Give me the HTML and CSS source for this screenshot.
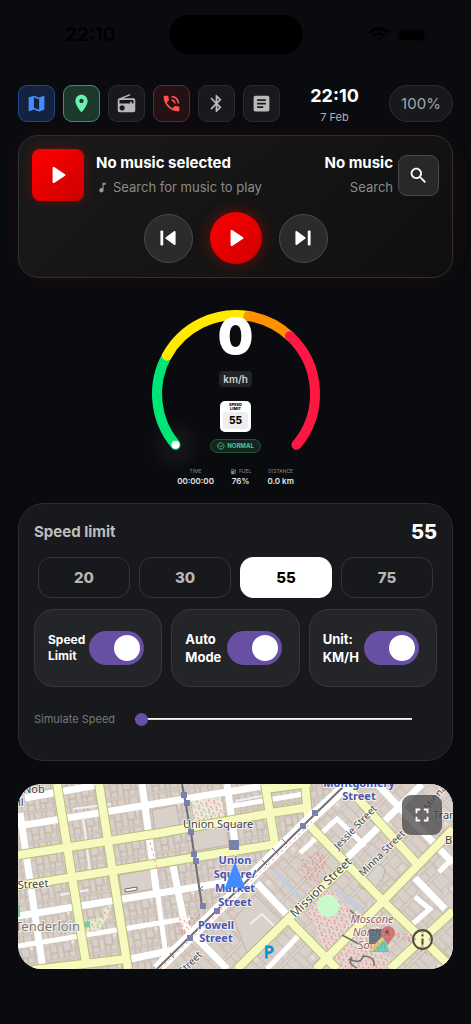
FILE: index.html
```html
<!DOCTYPE html>
<html lang="en">

<head>
  <meta charset="UTF-8">
  <title>Drive Dashboard</title>
  <meta name="viewport" content="width=device-width, initial-scale=1.0">
  <link rel="stylesheet" href="styles.css">
</head>

<body>

  <!-- Status bar -->
  <div class="status-bar">
    <div class="status-time">22:10</div>
    <div class="island"></div>
    <div class="status-icons">
      <svg width="24" height="6" viewBox="0 0 24 6" fill="#07080b">
        <circle cx="3" cy="5" r="1" /><circle cx="9" cy="5" r="1" /><circle cx="15" cy="5" r="1" /><circle cx="21" cy="5" r="1" />
      </svg>
      <svg width="20" height="15" viewBox="0 0 20 15" fill="none" stroke="#000" stroke-width="3">
        <path d="M1 5.5C6 .5 14 .5 19 5.5" />
        <path d="M4.5 9C7.5 6 12.5 6 15.5 9" />
        <path d="M7.5 11.5Q10 9.5 12.5 11.5L10 14z" fill="#000" stroke="none" />
      </svg>
      <svg width="32" height="14" viewBox="0 0 32 14">
        <rect x=".5" y=".5" width="28" height="13" rx="4" fill="none" stroke="#050608" />
        <rect x="2" y="2" width="25" height="10" rx="3" />
        <path d="M30 5v4q2-2 0-4" fill="#050608" />
      </svg>
    </div>
  </div>

  <main>
    <!-- Shortcuts and clock -->
    <header class="top-bar">
      <nav class="shortcuts">
        <button type="button" class="shortcut blue" aria-label="Map">
          <svg viewBox="0 0 24 24"><path d="M20.5 3l-.16.03L15 5.1 9 3 3.36 4.9c-.21.07-.36.25-.36.48V20.5c0 .28.22.5.5.5l.16-.03L9 18.9l6 2.1 5.64-1.9c.21-.07.36-.25.36-.48V3.5c0-.28-.22-.5-.5-.5zM15 19l-6-2.11V5l6 2.11V19z" /></svg>
        </button>
        <button type="button" class="shortcut green" aria-label="Location">
          <svg viewBox="0 0 24 24"><path d="M12 2C8.13 2 5 5.13 5 9c0 5.25 7 13 7 13s7-7.75 7-13c0-3.87-3.13-7-7-7zm0 9.5c-1.38 0-2.5-1.12-2.5-2.5s1.12-2.5 2.5-2.5 2.5 1.12 2.5 2.5-1.12 2.5-2.5 2.5z" /></svg>
        </button>
        <button type="button" class="shortcut" aria-label="Radio">
          <svg viewBox="0 0 24 24"><path d="M3.24 6.15C2.51 6.43 2 7.17 2 8v12c0 1.1.89 2 2 2h16c1.11 0 2-.9 2-2V8c0-1.11-.89-2-2-2H8.3l8.26-3.34L15.88 1 3.24 6.15zM7 20c-1.66 0-3-1.34-3-3s1.34-3 3-3 3 1.34 3 3-1.34 3-3 3zm13-8h-2v-2h-2v2H4V8h16v4z" /></svg>
        </button>
        <button type="button" class="shortcut red" aria-label="Phone">
          <svg viewBox="0 0 24 24"><path d="M20 15.5c-1.25 0-2.45-.2-3.57-.57-.35-.11-.74-.03-1.02.24l-2.2 2.2c-2.83-1.44-5.15-3.75-6.59-6.59l2.2-2.21c.28-.26.36-.65.25-1C8.7 6.45 8.5 5.25 8.5 4c0-.55-.45-1-1-1H4c-.55 0-1 .45-1 1 0 9.39 7.61 17 17 17 .55 0 1-.45 1-1v-3.5c0-.55-.45-1-1-1zM19 12h2c0-4.97-4.03-9-9-9v2c3.87 0 7 3.13 7 7zm-4 0h2c0-2.76-2.24-5-5-5v2c1.66 0 3 1.34 3 3z" /></svg>
        </button>
        <button type="button" class="shortcut" aria-label="Bluetooth">
          <svg viewBox="0 0 24 24"><path d="M17.71 7.71L12 2h-1v7.59L6.41 5 5 6.41 10.59 12 5 17.59 6.41 19 11 14.41V22h1l5.71-5.71-4.3-4.29 4.3-4.29zM13 5.83l1.88 1.88L13 9.59V5.83zm1.88 10.46L13 18.17v-3.76l1.88 1.88z" /></svg>
        </button>
        <button type="button" class="shortcut" aria-label="Notes">
          <svg viewBox="0 0 24 24"><path d="M19 3H5c-1.1 0-2 .9-2 2v14c0 1.1.9 2 2 2h14c1.1 0 2-.9 2-2V5c0-1.1-.9-2-2-2zm-5 14H7v-2h7v2zm3-4H7v-2h10v2zm0-4H7V7h10v2z" /></svg>
        </button>
      </nav>
      <div class="clock">
        <div class="clock-time">22:10</div>
        <div class="clock-date">7 Feb</div>
      </div>
      <div class="battery">100%</div>
    </header>

    <!-- Music player -->
    <section class="music">
      <div class="music-info">
        <div class="cover">
          <svg viewBox="0 0 24 24" width="26" height="26"><path d="M7 5.500v13c0 .8.900 1.200 1.500.8l10-6.500c.6-.4.6-1.200 0-1.600l-10-6.500C7.900 4.300 7 4.700 7 5.500z" /></svg>
        </div>
        <div class="track">
          <div class="track-title">No music selected</div>
          <div class="track-sub">
            <svg viewBox="0 0 24 24" width="13" height="13"><path d="M12 3v10.55c-.59-.34-1.27-.55-2-.55-2.21 0-4 1.79-4 4s1.79 4 4 4 4-1.79 4-4V7h4V3h-6z" /></svg>
            Search for music to play
          </div>
        </div>
        <div class="track track-right">
          <div class="track-title">No music</div>
          <div class="track-sub">Search</div>
        </div>
        <button type="button" class="search" aria-label="Search">
          <svg viewBox="0 0 24 24" width="21" height="21"><path d="M15.5 14h-.79l-.28-.27C15.41 12.59 16 11.11 16 9.5 16 5.91 13.09 3 9.5 3S3 5.91 3 9.5 5.91 16 9.5 16c1.61 0 3.09-.59 4.23-1.57l.27.28v.79l5 4.99L20.49 19l-4.99-5zm-6 0C7.01 14 5 11.99 5 9.5S7.01 5 9.5 5 14 7.01 14 9.5 11.99 14 9.5 14z" /></svg>
        </button>
      </div>
      <div class="controls">
        <button type="button" class="control" aria-label="Previous">
          <svg viewBox="0 0 24 24" width="26" height="26"><rect x="5" y="5" width="2.6" height="14" rx="1" /><path d="M19 6.500v11c0 .8-.8 1.200-1.500.8l-7.500-5.500c-.6-.4-.6-1.200 0-1.600l7.500-5.500c.7-.4 1.500 0 1.500.8z" /></svg>
        </button>
        <button type="button" class="control play" aria-label="Play">
          <svg viewBox="0 0 24 24" width="26" height="26"><path d="M7 5.500v13c0 .8.900 1.200 1.500.8l10-6.500c.6-.4.6-1.200 0-1.600l-10-6.500C7.900 4.300 7 4.700 7 5.500z" /></svg>
        </button>
        <button type="button" class="control" aria-label="Next">
          <svg viewBox="0 0 24 24" width="26" height="26"><rect x="16.4" y="5" width="2.6" height="14" rx="1" /><path d="M5 6.500v11c0 .8.800 1.200 1.500.8l7.500-5.500c.6-.4.6-1.200 0-1.600L6.500 5.700C5.800 5.300 5 5.700 5 6.500z" /></svg>
        </button>
      </div>
    </section>

    <!-- Speedometer -->
    <section class="gauge">
      <svg class="dial" width="170" height="170" viewBox="0 0 170 170" fill="none" stroke-width="10" stroke-linecap="round">
        <defs>
          <radialGradient id="glow">
            <stop offset="0" stop-color="#fff" stop-opacity=".06" />
            <stop offset="1" stop-color="#fff" stop-opacity="0" />
          </radialGradient>
        </defs>
        <circle cx="24.5" cy="135.8" r="28" fill="url(#glow)" />
        <path d="M24.5 135.8A79 79 0 0 1 15.9 46.7" stroke="#00e676" />
        <path d="M15.9 46.7A79 79 0 0 1 97.4 7" stroke="#ffea00" />
        <path d="M97.4 7A79 79 0 0 1 138.9 27.2" stroke="#ff9100" />
        <path d="M138.9 27.2A79 79 0 0 1 145.5 135.8" stroke="#ff1744" />
        <circle cx="24.5" cy="135.8" r="4" fill="#fff" />
      </svg>
      <div class="readout">
        <div class="speed">0</div>
        <div class="unit">km/h</div>
        <div class="sign">
          <div class="sign-label">SPEED<br>LIMIT</div>
          <div class="sign-value">55</div>
        </div>
        <div class="state">
          <svg viewBox="0 0 24 24" width="8" height="8" fill="none" stroke="currentColor" stroke-width="2.5"><path d="M21 9.500A9.500 9.500 0 1 1 17 4M7 11l4 4L21 5" /></svg>
          NORMAL
        </div>
        <div class="stats">
          <div class="stat">
            <div class="stat-label">TIME</div>
            <div class="stat-value">00:00:00</div>
          </div>
          <div class="stat">
            <div class="stat-label">
              <svg viewBox="0 0 24 24" width="7" height="7" fill="currentColor"><path d="M19.77 7.23l.01-.01-3.72-3.72L15 4.56l2.11 2.11c-.94.36-1.61 1.26-1.61 2.33 0 1.38 1.12 2.5 2.5 2.5.36 0 .69-.08 1-.21v7.21c0 .55-.45 1-1 1s-1-.45-1-1V14c0-1.1-.9-2-2-2h-1V5c0-1.1-.9-2-2-2H6c-1.1 0-2 .9-2 2v16h10v-7.5h1.5v5c0 1.38 1.12 2.5 2.5 2.5s2.5-1.12 2.5-2.5V9c0-.69-.28-1.32-.73-1.77zM12 10H6V5h6v5z" /></svg>
              FUEL
            </div>
            <div class="stat-value">76%</div>
          </div>
          <div class="stat">
            <div class="stat-label">DISTANCE</div>
            <div class="stat-value">0.0 km</div>
          </div>
        </div>
      </div>
    </section>

    <!-- Speed limit settings -->
    <section class="settings">
      <div class="settings-head">
        <h2>Speed limit</h2>
        <span class="limit">55</span>
      </div>
      <div class="presets">
        <button type="button">20</button>
        <button type="button">30</button>
        <button type="button" class="active">55</button>
        <button type="button">75</button>
      </div>
      <div class="toggles">
        <div class="toggle">
          <label class="small" for="speed-limit">Speed<br>Limit</label>
          <input type="checkbox" role="switch" id="speed-limit" checked>
        </div>
        <div class="toggle">
          <label for="auto-mode">Auto<br>Mode</label>
          <input type="checkbox" role="switch" id="auto-mode" checked>
        </div>
        <div class="toggle">
          <label for="unit">Unit:<br>KM/H</label>
          <input type="checkbox" role="switch" id="unit" checked>
        </div>
      </div>
      <div class="simulate">
        <label for="simulate">Simulate Speed</label>
        <input type="range" id="simulate" min="0" max="200" value="0">
      </div>
    </section>

    <!-- Map -->
    <section class="map">
      <svg class="map-canvas" viewBox="0 0 435 185" preserveAspectRatio="xMidYMid slice">
        <defs>
          <g id="lots" fill="#d9d0c9" stroke="#c2b2a7" stroke-width=".8">
            <rect width="42" height="30" fill="#ded8d2" stroke="none" />
            <path d="M0 1h6v9H0zM6 1h5v12H6zM11 1h8v7h-8zM19 1h4v11h-4zM23 1h9v9h-9zM32 1h6v13h-6zM38 1h4v8h-4z" />
            <path d="M11 8h8v6h-8zM0 10h6v6H0zM6 15h7v8H6zM0 18h6v11H0zM13 16h6v13h-6zM6 23h7v6H6zM19 14h8v9h-8zM19 23h5v6h-5zM24 23h7v6h-7zM27 12h5v9h-5zM32 16h6v7h-6zM32 23h10v6H32zM38 10h4v11h-4z" />
            <path d="M14 9h2v3h-2zM28 13h3v3h-3z" fill="#eee7dc" stroke="none" />
          </g>
          <pattern id="blocks" width="42" height="30" patternUnits="userSpaceOnUse" patternTransform="rotate(-9)"><use href="#lots" /></pattern>
          <pattern id="blocks-south" width="42" height="30" patternUnits="userSpaceOnUse" patternTransform="rotate(-45) scale(1.5)"><use href="#lots" /></pattern>
          <pattern id="dots" width="8" height="7" patternUnits="userSpaceOnUse" patternTransform="rotate(-20)">
            <path d="M1 1h2M5 3l1 1M2 5l1 1M6 6h1" stroke="#f56f6f" stroke-width="1.2" />
          </pattern>
        </defs>

        <!-- City blocks -->
        <rect width="435" height="185" fill="url(#blocks)" />
        <path d="M139 185L330 0h105v185z" fill="#d9d0c9" />
        <path d="M139 185L330 0h105v185z" fill="url(#blocks-south)" opacity=".65" />
        <path d="M101 91l34-6 3 19-34 7zM174 48l34-7 3 20-35 6zM134 26l24-5 4 20-25 6z" fill="#d9d0c9" stroke="#c2b2a7" />
        <path d="M216 135l21-24 28 27-35 34z" fill="#d9d0c9" stroke="#c2b2a7" />
        <path d="M340 102l20-22q10 2 5 14l-12 15z" fill="#d8d3ce" stroke="#bcaea3" />

        <!-- Minor streets -->
        <g fill="none">
          <path d="M0 42L142 19 245 2M7 14L85 0M2 29L25 185M0 132L142 109 215 97M112 175L165 164M124 0L139 112M155 82L167 142 209 185M209 0L217 59M239 99L270 132M329 74L389 15 404 0M359 0L435 79M397 94L427 125" stroke="#ccc5bf" stroke-width="8" />
          <path d="M0 42L142 19 245 2M7 14L85 0M2 29L25 185M0 132L142 109 215 97M112 175L165 164M124 0L139 112M155 82L167 142 209 185M209 0L217 59M239 99L270 132M329 74L389 15 404 0M359 0L435 79M397 94L427 125" stroke="#fff" stroke-width="7" />
          <path d="M0 162L172 134M139 105L149 179M214 22L292 9M249 185L282 150M282 69L319 35 347 62M392 142L412 125 397 113M421 88L435 74" stroke="#fff" stroke-width="5" />
          <path d="M65 34l4 26M69 65l3 23M42 111l28-5M55 25l38-5M218 17l30-6M232 140l12-10 15 15" stroke="#eef0f4" stroke-width="2" />
          <path d="M255 85l38 40M318 105l26 21" stroke="#c8ccd9" stroke-width="5" />
        </g>

        <!-- Parks and plazas -->
        <path d="M174 17l30-4 2 21-30 5z" fill="#e6eddc" />
        <path d="M174 17l30-4 2 21-30 5z" fill="url(#dots)" />
        <path d="M67 137l18-4 1-9 6-2-2 12-10 13-12 2z" fill="#dcefcf" />
        <path d="M67 137l18-4 1-9 6-2-2 12-10 13-12 2z" fill="url(#dots)" />
        <path d="M66 138l6-1v6l-6 1z" fill="#79caa4" />
        <path d="M290 128l17-25 10 6 30 38 27 31-10 7h-45l-14-21z" fill="#e1d9d2" />
        <path d="M290 128l17-25 10 6 30 38 27 31-10 7h-45l-14-21zM160 134l24-8-4 12-12 15-11-9zM376 150l25-2 31 28-4 6-38-22z" fill="url(#dots)" />
        <path d="M282 76l20-9 8 11-8 18-16 4z" fill="url(#dots)" />
        <circle cx="310" cy="122" r="11" fill="#c8facc" />
        <path d="M0 121v12h2v-12z" fill="#79caa4" />

        <!-- Main streets -->
        <g fill="none" stroke-linejoin="round">
          <path d="M39 0L68 179M81 0L110 185M0 71L142 49 259 28 292 23M0 102L142 79 259 60M15 186L108 175M247 0L257 60M287 0L291 42M247 5L292-1M292 42L365 117 435 185M327 0L399 80M435 45L365 117 298 185M329 80L270 135 219 185M270 135L319 185M435 127L372 185" stroke="#b9bd7c" stroke-width="10" />
          <path d="M39 0L68 179M81 0L110 185M0 71L142 49 259 28 292 23M0 102L142 79 259 60M15 186L108 175M247 0L257 60M287 0L291 42M247 5L292-1M292 42L365 117 435 185M327 0L399 80M435 45L365 117 298 185M329 80L270 135 219 185M270 135L319 185M435 127L372 185" stroke="#f7fabf" stroke-width="8" />
          <path d="M139 185L292 35 330 0" stroke="#fff" stroke-width="11" />
          <path d="M132 58L141 92M142 185L294 38" stroke="#f79a9a" stroke-dasharray="3 3" />
        </g>

        <!-- Rail lines and stations -->
        <g fill="none" stroke="#707070">
          <path d="M164 0L173 49 184 122M139 185L292 35 325 3" stroke-width="2" />
          <path d="M180 102l5 5M185 102l-5 5M152 169l4 5M254 64l6 6M244 76l5 5M264 55l5 5" />
          <path d="M331 175q12 6 14-3 12 0 11 10M334 173q-5 7 5 11M332 126l8 8M324 151l19 10" stroke-width="1.5" />
        </g>
        <path d="M163 8h6v6h-6zM166 16h6v6h-6zM170 45h6v6h-6zM173 67h6v6h-6zM175 74h6v6h-6zM182 119h6v6h-6zM196 124h6v6h-6zM169 151h6v6h-6zM282 39h6v6h-6zM294 26h6v6h-6zM211 56h10v10h-10z" fill="#7981b0" />
        <path d="M107 105l12-2v3l-12 2z" fill="#fff" stroke="#776666" />

        <!-- Labels -->
        <g class="street-label">
          <text x="5" y="9">Nob</text>
          <text x="-11" y="22">Hill</text>
          <text x="0" y="105" transform="rotate(-4 0 105)">Street</text>
          <text x="165" y="44">Union Square</text>
          <text class="narrow-street" x="320" y="66" transform="rotate(-46 320 66)">Jessie Street</text>
          <text class="narrow-street" x="345" y="93" transform="rotate(-45 345 93)">Minna Street</text>
          <text class="narrow-street" x="410" y="27" transform="rotate(-50 410 27)">Minna Street</text>
          <text class="wide-street" x="277" y="134" transform="rotate(-44 277 134)">Mission Street</text>
          <text class="narrow-street" x="152" y="204" transform="rotate(-45 152 204)">4th Street</text>
          <text x="415" y="35">Transbay</text>
          <text x="427" y="60">Br</text>
        </g>
        <text class="area-label" x="-3" y="147">Tenderloin</text>
        <g class="station-label">
          <text x="217" y="80">Union</text>
          <text x="217" y="94">Square/</text>
          <text x="217" y="108">Market</text>
          <text x="217" y="122">Street</text>
          <text x="198" y="145">Powell</text>
          <text x="198" y="158">Street</text>
          <text x="341" y="3">Montgomery</text>
          <text x="341" y="16">Street</text>
        </g>
        <g class="place-label">
          <text x="354" y="139">Moscone</text>
          <text x="354" y="152">North &amp;</text>
          <text x="354" y="165">South</text>
        </g>
        <text class="parking" x="246" y="174">P</text>

        <!-- Landmark logo -->
        <g opacity=".8">
          <path d="M351 145h15v15h-15z" fill="#4e5d70" />
          <path d="M351 168l15-18 5 18z" fill="#55c7a6" />
          <path d="M351 166l15-15 2 3-14 14z" fill="#efc35b" />
          <path d="M370 162c-2-7-7-8-7-13a7 7 0 0 1 14 0c0 5-5 6-7 13z" fill="#ce6262" />
          <circle cx="369" cy="148" r="2" fill="#703d45" />
        </g>
        <path d="M217 78l-11 28 11-4 11 4z" fill="#448aff" />
      </svg>
      <button type="button" class="fullscreen" aria-label="Full screen">
        <svg viewBox="0 0 24 24" width="22" height="22"><path d="M7 14H5v5h5v-2H7v-3zm-2-4h2V7h3V5H5v5zm12 7h-3v2h5v-5h-2v3zM14 5v2h3v3h2V5h-5z" /></svg>
      </button>
      <button type="button" class="info" aria-label="Map information">
        <svg viewBox="0 0 24 24" width="25" height="25"><path d="M11 7h2v2h-2zm0 4h2v6h-2zm1-9C6.48 2 2 6.48 2 12s4.48 10 10 10 10-4.48 10-10S17.52 2 12 2zm0 18c-4.41 0-8-3.59-8-8s3.59-8 8-8 8 3.59 8 8-3.59 8-8 8z" /></svg>
      </button>
    </section>
  </main>

</body>

</html>
```
FILE: styles.css
```css
* {
  box-sizing: border-box;
}

body {
  margin: 0;
  min-height: 100vh;
  background: #0a0b0f;
  color: #fff;
  font-family: Inter, "Liberation Sans", sans-serif;
}

button {
  padding: 0;
  font-family: inherit;
  cursor: pointer;
}

svg {
  display: block;
}

/* Status bar */
.status-bar {
  display: grid;
  grid-template-columns: 1fr 134px 1fr;
  align-items: center;
  padding-top: 15px;
  margin-bottom: 31px;
  color: #000;
}

.status-time {
  padding-left: 12px;
  text-align: center;
  font-size: 19px;
  font-weight: 600;
}

.island {
  height: 39px;
  border-radius: 20px;
  background: #000;
}

.status-icons {
  display: flex;
  justify-content: center;
  align-items: center;
  gap: 8px;
  padding-right: 8px;
}

main {
  padding: 0 18px 55px;
}

/* Top bar */
.top-bar {
  display: flex;
  align-items: flex-start;
  margin-bottom: 8px;
}

.shortcuts {
  display: flex;
  gap: 8px;
}

.shortcut {
  display: grid;
  place-items: center;
  width: 37px;
  height: 37px;
  border: 1px solid #2b2c2f;
  border-radius: 9px;
  background: #18191c;
  color: #b9b9ba;
}

.shortcut svg {
  width: 21px;
  height: 21px;
  fill: currentColor;
}

.blue {
  background: #15223d;
  border-color: #254887;
  color: #448aff;
}

.green {
  background: #1c382c;
  border-color: #3f9168;
  color: #69f0ae;
}

.red {
  background: #231115;
  border-color: #6b272b;
  color: #ff5252;
}

.clock {
  flex: 1;
  text-align: center;
}

.clock-time {
  font-size: 18px;
  line-height: 22px;
  font-weight: 700;
}

.clock-date {
  font-size: 11px;
  line-height: 20px;
  color: #b2b2b4;
}

.battery {
  width: 64px;
  height: 37px;
  border: 1px solid #2b2c2f;
  border-radius: 19px;
  background: #18191c;
  color: #a5a5a7;
  font-size: 15px;
  line-height: 35px;
  text-align: center;
}

/* Music player */
.music {
  padding: 13px;
  border: 1px solid #303030;
  border-radius: 20px;
  background: linear-gradient(135deg, #1a1a1a, #0f0f0f);
  box-shadow: 0 0 20px rgba(255, 0, 0, 0.08);
  margin-bottom: 31px;
}

.music svg {
  fill: #fff;
}

.music-info {
  display: flex;
  align-items: center;
}

.cover {
  display: grid;
  place-items: center;
  width: 52px;
  height: 52px;
  margin-right: 12px;
  border-radius: 8px;
  background: linear-gradient(135deg, #ff0000, #cc0000);
  box-shadow: 0 0 12px rgba(255, 0, 0, 0.3);
}

.track {
  flex: 1;
}

.track-right {
  flex: none;
  text-align: right;
}

.track-title {
  font-size: 15px;
  line-height: 24px;
  font-weight: 700;
}

.track-sub {
  display: flex;
  align-items: center;
  gap: 4px;
  color: #8b8b8b;
  font-size: 13px;
  line-height: 24px;
}

.track-right .track-sub {
  justify-content: flex-end;
}

.music .track-sub svg {
  fill: #999;
}

.search {
  display: grid;
  place-items: center;
  width: 41px;
  height: 41px;
  margin-left: 5px;
  border: 1px solid #484848;
  border-radius: 9px;
  background: #282828;
}

.controls {
  display: flex;
  justify-content: center;
  align-items: center;
  gap: 17px;
  margin-top: 11px;
}

.control {
  display: grid;
  place-items: center;
  width: 49px;
  height: 49px;
  border: 1px solid #4b4b4b;
  border-radius: 50%;
  background: #2b2b2b;
}

.play {
  width: 52px;
  height: 52px;
  border: none;
  background: linear-gradient(135deg, #ff0000, #cc0000);
  box-shadow: 0 0 16px rgba(255, 0, 0, 0.4);
}

/* Speedometer */
.gauge {
  display: grid;
  justify-items: center;
  margin-bottom: 16px;
}

.dial,
.readout {
  grid-area: 1 / 1;
}

.dial {
  overflow: visible;
}

.readout {
  display: flex;
  flex-direction: column;
  align-items: center;
  padding-top: 2px;
}

.speed {
  font-size: 50px;
  line-height: 50px;
  font-weight: 900;
}

.unit {
  margin-top: 10px;
  padding: 0 4px;
  border-radius: 4px;
  background: #222327;
  color: #d2d2d3;
  font-size: 10px;
  line-height: 16px;
  font-weight: 600;
}

.sign {
  width: 31px;
  height: 31px;
  margin-top: 14px;
  padding: 2px 3px;
  border-radius: 5px;
  background: #fff;
  color: #000;
  text-align: center;
}

.sign-label {
  font-size: 4px;
  line-height: 4px;
  font-weight: 800;
}

.sign-value {
  margin-top: 1px;
  border-radius: 3px;
  background: #eee;
  font-size: 10px;
  line-height: 17px;
  font-weight: 800;
}

.state {
  display: flex;
  align-items: center;
  gap: 2px;
  margin-top: 7px;
  padding: 0 6px;
  border: 1px solid #235039;
  border-radius: 7px;
  background: #12251e;
  color: #57c590;
  font-size: 6px;
  line-height: 12px;
  font-weight: 700;
}

.stats {
  display: flex;
  gap: 16px;
  margin-top: 14px;
  text-align: center;
}

.stat-label {
  display: flex;
  justify-content: center;
  align-items: center;
  gap: 2px;
  color: #858689;
  font-size: 5px;
  line-height: 8px;
}

.stat-value {
  color: #e7e7e7;
  font-size: 8px;
  line-height: 12px;
  font-weight: 600;
}

/* Speed limit settings */
.settings {
  padding: 16px 15px 17px;
  border: 1px solid #2c2d30;
  border-radius: 26px;
  background: #18191c;
  margin-bottom: 23px;
}

.settings-head {
  display: flex;
  justify-content: space-between;
  margin-bottom: 13px;
  line-height: 24px;
}

.settings-head h2 {
  margin: 0;
  color: #bebebf;
  font-size: 15px;
  font-weight: 700;
}

.limit {
  font-size: 20px;
  font-weight: 800;
}

.presets {
  display: grid;
  grid-template-columns: repeat(4, 1fr);
  gap: 9px;
  padding: 0 4px;
}

.presets button {
  height: 41px;
  border: 1px solid #343538;
  border-radius: 13px;
  background: transparent;
  color: #b6b6b7;
  font-size: 15px;
  font-weight: 800;
}

.presets .active {
  border-color: #fff;
  background: #fff;
  color: #000;
}

.toggles {
  display: grid;
  grid-template-columns: repeat(3, 1fr);
  gap: 9px;
  margin-top: 11px;
}

.toggle {
  display: flex;
  justify-content: space-between;
  align-items: center;
  height: 78px;
  padding: 0 17px 0 13px;
  border: 1px solid #37383b;
  border-radius: 20px;
  background: #242528;
}

.toggle label {
  font-size: 13px;
  line-height: 18px;
  font-weight: 700;
}

.toggle .small {
  font-size: 12px;
  line-height: 16px;
}

.toggle input {
  appearance: none;
  flex: none;
  width: 55px;
  height: 34px;
  margin: 0;
  padding: 4px;
  border-radius: 17px;
  background: #39393d;
  cursor: pointer;
}

.toggle input::before {
  content: "";
  display: block;
  width: 26px;
  height: 26px;
  border-radius: 50%;
  background: #fff;
}

.toggle input:checked {
  background: #6750a4;
}

.toggle input:checked::before {
  margin-left: auto;
}

.simulate {
  display: flex;
  align-items: center;
  gap: 20px;
  height: 48px;
  margin-top: 8px;
  padding-right: 25px;
}

.simulate label {
  color: #77787a;
  font-size: 11px;
}

.simulate input {
  appearance: none;
  flex: 1;
  min-width: 0;
  height: 13px;
  margin: 0;
  background: linear-gradient(#fff, #cac4d0) center / 100% 2px no-repeat;
}

.simulate input::-webkit-slider-thumb {
  appearance: none;
  width: 13px;
  height: 13px;
  border-radius: 50%;
  background: #6750a4;
}

/* Map */
.map {
  position: relative;
  height: 185px;
  border-radius: 23px;
  overflow: hidden;
}

.map-canvas {
  width: 100%;
  height: 100%;
}

.map text {
  font-family: "Noto Sans", sans-serif;
  paint-order: stroke;
  stroke: rgba(255, 255, 255, 0.7);
  stroke-width: 2px;
}

.street-label {
  fill: #444;
  font-size: 11px;
}

.narrow-street {
  font-size: 10px;
}

.wide-street {
  font-size: 12px;
}

.area-label {
  fill: #777;
  font-size: 13px;
}

.station-label {
  fill: #4b55b0;
  font-size: 11px;
  font-weight: 700;
  text-anchor: middle;
}

.place-label {
  fill: #986064;
  font-size: 11px;
  font-style: italic;
  text-anchor: middle;
}

.map .parking {
  fill: #0092da;
  stroke: #0092da;
  stroke-width: 1px;
  font-size: 16px;
}

.fullscreen,
.info {
  position: absolute;
  display: grid;
  place-items: center;
  border: none;
}

.fullscreen {
  top: 11px;
  right: 11px;
  width: 40px;
  height: 40px;
  border-radius: 9px;
  background: rgba(70, 70, 70, 0.75);
  fill: #fff;
}

.info {
  right: 18px;
  bottom: 17px;
  background: none;
  fill: #544b43;
}
```
